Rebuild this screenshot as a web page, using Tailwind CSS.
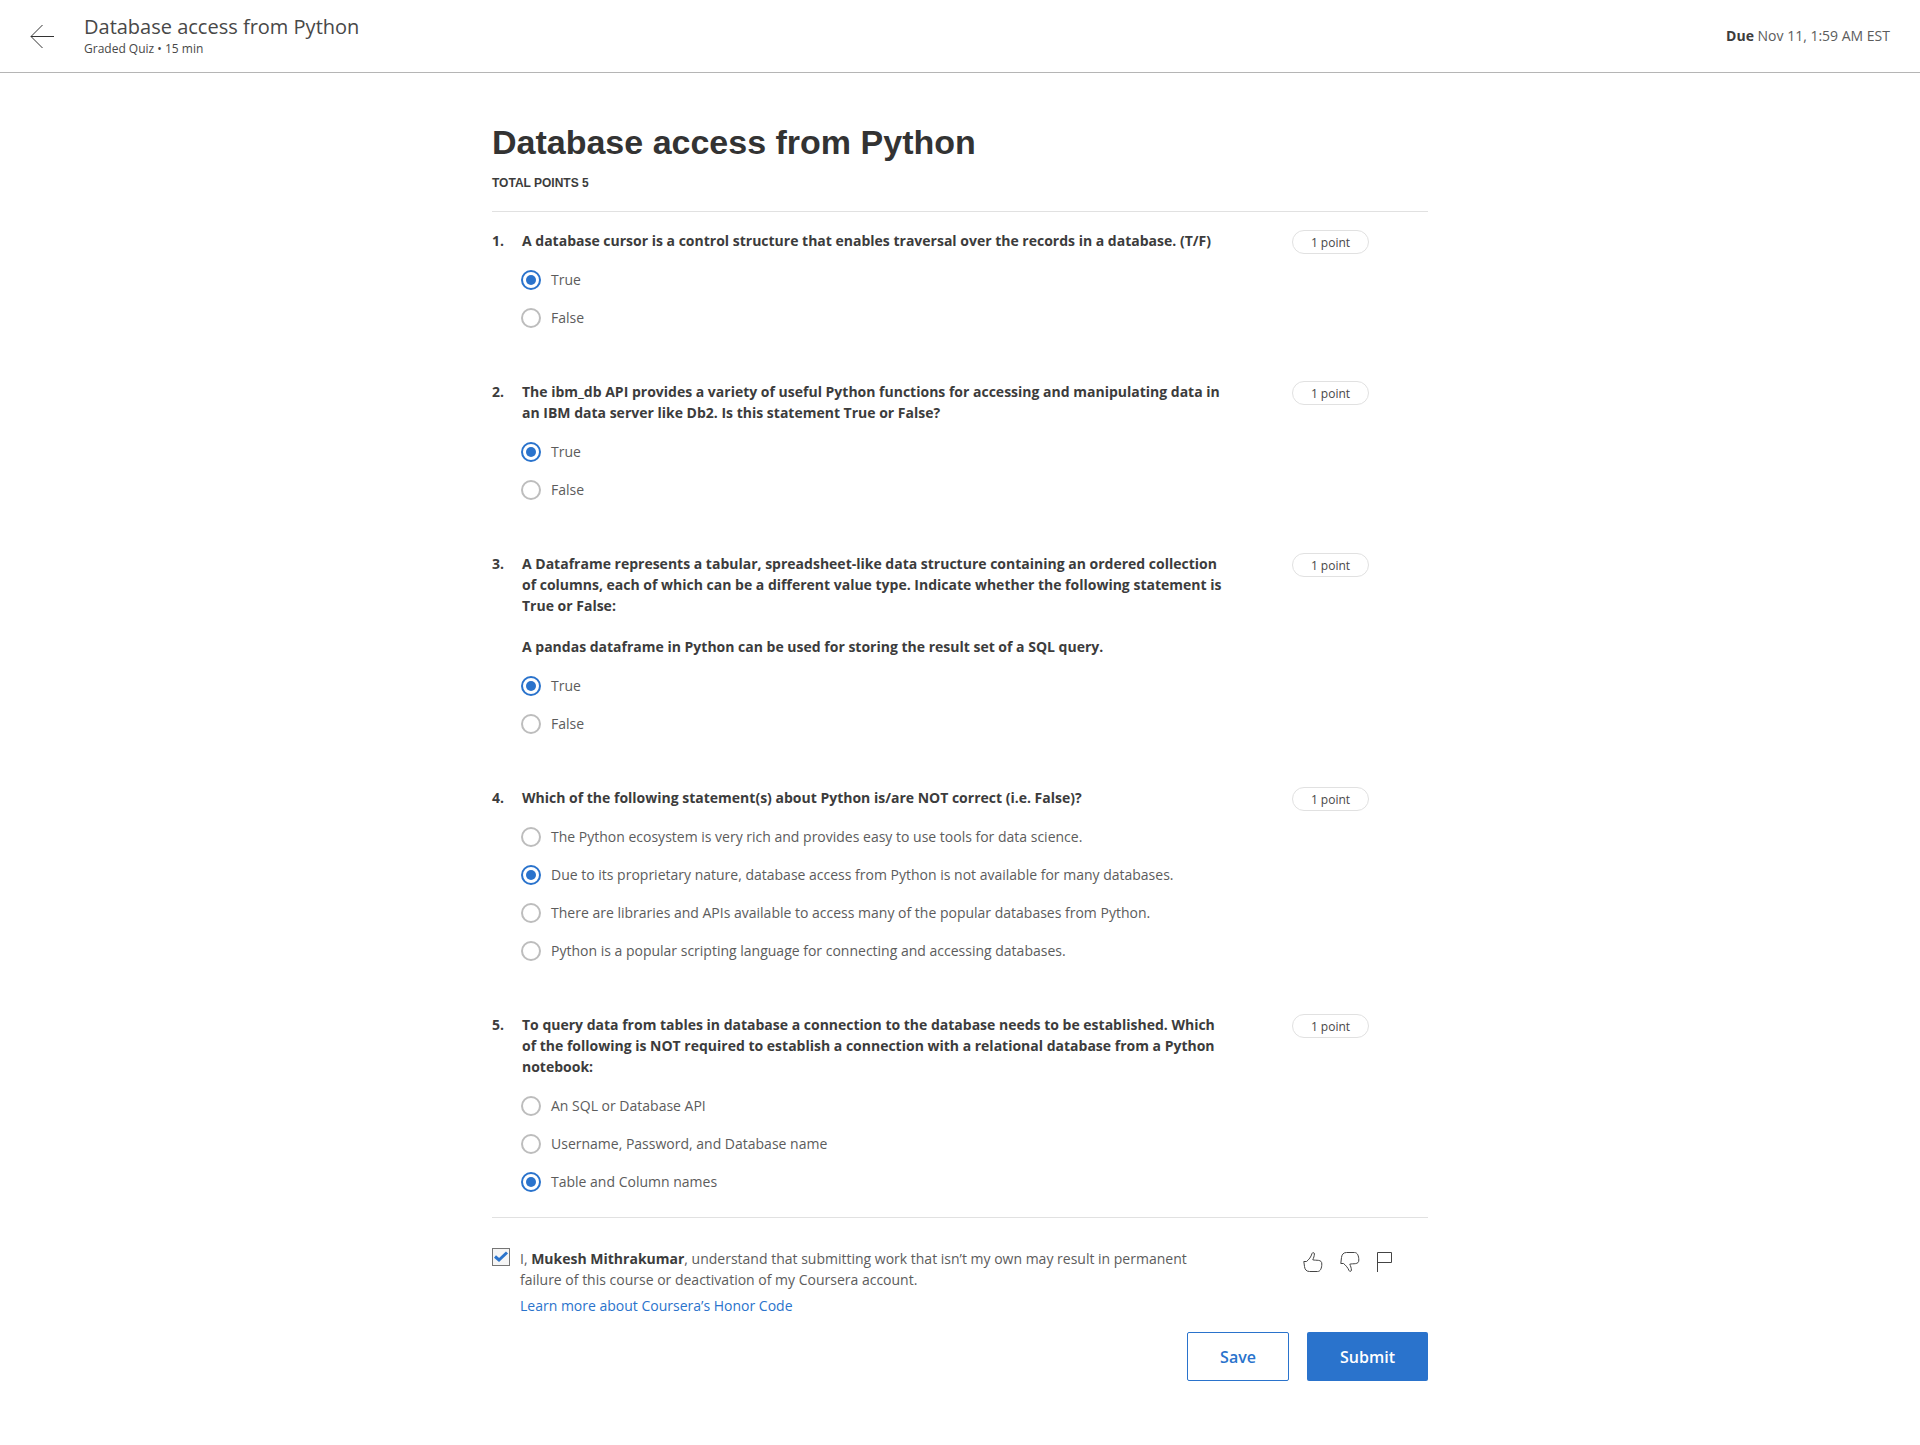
<!DOCTYPE html>
<html lang="en">
<head>
<meta charset="utf-8">
<meta name="viewport" content="width=device-width, initial-scale=1">
<title>Database access from Python</title>
<script src="https://cdn.jsdelivr.net/npm/@tailwindcss/browser@4"></script>
</head>
<body class="bg-white font-['Open_Sans',sans-serif] text-sm leading-[21px] text-[#5c5c5c]">
<header class="flex h-[73px] items-center justify-between border-b border-[#b5b5b5] px-[30px] pb-px">
  <div class="flex items-center gap-[30px]">
    <a href="#" aria-label="Back" class="text-[#333]">
      <svg class="h-6 w-6" viewBox="0 0 24 24" fill="none" stroke="currentColor" stroke-width="1"><path d="M24 12.5H1M12.5 1L1 12.5L12.5 24"/></svg>
    </a>
    <div class="pt-0.5 text-[#484848]">
      <p class="text-xl leading-6">Database access from Python</p>
      <p class="text-xs leading-5">Graded Quiz • 15 min</p>
    </div>
  </div>
  <p><strong class="font-bold text-[#3c3c3c]">Due</strong> Nov 11, 1:59 AM EST</p>
</header>

<main class="mx-auto max-w-[936px] pt-12 pb-16">
  <h1 class="font-['Liberation_Sans',sans-serif] text-[34px] leading-[42px] font-bold text-[#333]">Database access from Python</h1>
  <p class="mt-2 font-['Liberation_Sans',sans-serif] text-xs leading-6 font-bold text-[#3c3c3c]">TOTAL POINTS 5</p>

  <form>
    <div class="mt-4 flex flex-col gap-[53px] border-y border-[#e1e1e1] pt-[18px] pb-[25px]" id="questions"></div>

    <div class="mt-[30px] flex items-start justify-between">
      <div class="flex items-start gap-[10px]">
        <span class="relative h-[18px] w-[18px] shrink-0">
          <input id="honor" type="checkbox" checked class="peer block h-[18px] w-[18px] appearance-none border border-[#757575] bg-[#f5f5f5]">
          <svg class="pointer-events-none invisible absolute inset-0 h-[18px] w-[18px] peer-checked:visible" viewBox="0 0 18 18" fill="none" stroke="#2a73cc" stroke-width="3"><path d="M3 8.500L7 12L15 4.500"/></svg>
        </span>
        <div>
          <label for="honor" class="block max-w-[690px]">I, <strong class="font-bold text-[#3c3c3c]">Mukesh Mithrakumar</strong>, understand that submitting work that isn’t my own may result in permanent failure of this course or deactivation of my Coursera account.</label>
          <a href="#" class="mt-[5px] block text-[#2a73cc]">Learn more about Coursera’s Honor Code</a>
        </div>
      </div>
      <div class="flex gap-[17px] pt-1 pr-[31px] text-[#444]">
        <button type="button" aria-label="Like"><svg class="h-5 w-5" viewBox="0 0 20 20" fill="none" stroke="currentColor"><path d="M.8 9.500H3.500C6 7.500 8 5 9 1.500C9.500.2 11.400.3 11.400 2C11.400 4 10.500 6 9.800 7.800C13 8.800 19 7 18.800 12C18.800 16 17.500 19.500 14.500 19.500H6.500C3 19.500 1.800 17 1.500 14.500Z"/></svg></button>
        <button type="button" aria-label="Dislike"><svg class="h-5 w-5" viewBox="0 0 20 20" fill="none" stroke="currentColor"><path d="M.8 11.500H3.500C6 13.500 8 16 9 18.500C9.500 19.800 11.400 19.700 11.400 18C11.400 16 10.500 14 9.800 12.200C13 11.200 19 13 18.800 8C18.800 4 17.500.5 14.500.5H6.500C3 .5 1.800 3 1.500 5.500Z"/></svg></button>
        <button type="button" aria-label="Report"><svg class="h-5 w-5" viewBox="0 0 20 20" fill="none" stroke="currentColor"><path d="M.5 20V.5H14.500V10.500H.5"/></svg></button>
      </div>
    </div>

    <div class="mt-4 flex justify-end gap-[18px] text-base font-semibold">
      <button type="button" class="h-[49px] w-[102px] rounded-xs border border-[#2a73cc] text-[#2a73cc]">Save</button>
      <button type="submit" class="h-[49px] w-[121px] rounded-xs bg-[#2a73cc] text-white">Submit</button>
    </div>
  </form>
</main>

<script>
const questions = [
  { text: ['A database cursor is a control structure that enables traversal over the records in a database. (T/F)'], options: ['True', 'False'], answer: 0 },
  { text: ['The ibm_db API provides a variety of useful Python functions for accessing and manipulating data in an IBM data server like Db2. Is this statement True or False?'], options: ['True', 'False'], answer: 0 },
  { text: ['A Dataframe represents a tabular, spreadsheet-like data structure containing an ordered collection of columns, each of which can be a different value type. Indicate whether the following statement is True or False:', 'A pandas dataframe in Python can be used for storing the result set of a SQL query.'], options: ['True', 'False'], answer: 0 },
  { text: ['Which of the following statement(s) about Python is/are NOT correct (i.e. False)?'], options: ['The Python ecosystem is very rich and provides easy to use tools for data science.', 'Due to its proprietary nature, database access from Python is not available for many databases.', 'There are libraries and APIs available to access many of the popular databases from Python.', 'Python is a popular scripting language for connecting and accessing databases.'], answer: 1 },
  { text: ['To query data from tables in database a connection to the database needs to be established. Which of the following is NOT required to establish a connection with a relational database from a Python notebook:'], options: ['An SQL or Database API', 'Username, Password, and Database name', 'Table and Column names'], answer: 2 },
];
document.getElementById('questions').innerHTML = questions.map((q, i) => `
  <section class="flex items-start">
    <span class="w-[30px] shrink-0 font-bold text-[#3c3c3c]">${i + 1}.</span>
    <fieldset class="w-[704px] min-w-0">
      <legend class="flex flex-col gap-5 font-bold text-[#3c3c3c]">${q.text.map(t => `<p>${t}</p>`).join('')}</legend>
      <div class="mt-[19px] -ml-px flex flex-col gap-[18px]">
        ${q.options.map((o, j) => `
        <label class="flex h-5 items-start gap-[10px]">
          <input type="radio" name="q${i}" ${j === q.answer ? 'checked' : ''} class="h-5 w-5 shrink-0 appearance-none rounded-full border-2 border-[#bdbdbd] bg-white bg-clip-content p-[3px] checked:border-[#2a73cc] checked:bg-[#2a73cc]">
          <span class="leading-5">${o}</span>
        </label>`).join('')}
      </div>
    </fieldset>
    <span class="mr-[59px] ml-auto flex h-6 w-[77px] items-center justify-center rounded-full border border-[#e1e1e1] pt-0.5 text-xs text-[#484848]">1 point</span>
  </section>`).join('');
</script>
</body>
</html>
